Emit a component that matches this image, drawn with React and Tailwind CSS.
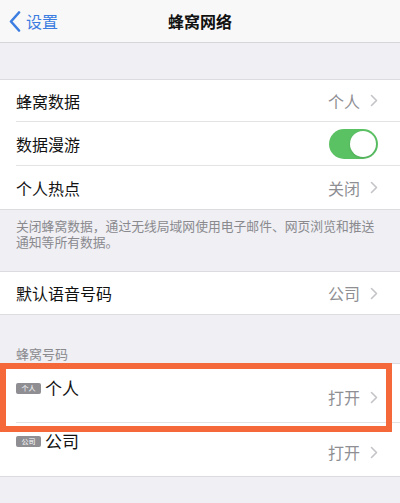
const font = "font-['Noto_Sans_CJK_SC',sans-serif]"

function Chevron() {
  return (
    <svg width="8" height="13" viewBox="0 0 8 13" className="ml-[10px]">
      <path d="M1.5 1.5 L6.5 6.5 L1.5 11.5" fill="none" stroke="#c4c4c8" strokeWidth="1.6" strokeLinecap="round" strokeLinejoin="round" />
    </svg>
  )
}

function Row({ label, value, toggle, last, height = 'h-[44px]' }) {
  return (
    <div className={`flex items-center pl-4 bg-white ${height}`}>
      <div className={`flex h-full flex-1 items-center pr-[22px] ${last ? '' : 'border-b border-[#e3e3e6]'}`}>
        <span className="flex-1 text-[16px] text-[#111]">{label}</span>
        {toggle ? (
          <div className="flex h-[30px] w-[49px] items-center justify-end rounded-full bg-[#5bc264] pr-[2px]">
            <div className="h-[26px] w-[26px] rounded-full bg-white shadow" />
          </div>
        ) : (
          <span className="flex items-center text-[16px] text-[#8e8e93]">
            {value}
            <Chevron />
          </span>
        )}
      </div>
    </div>
  )
}

function SimRow({ badge, label, last, height, titleTop, valueTop }) {
  return (
    <div className={`flex bg-white pl-4 ${height}`}>
      <div className={`flex h-full flex-1 pr-[22px] ${last ? '' : 'border-b border-[#e3e3e6]'}`}>
        <div className={`flex flex-1 items-center gap-[4px] self-start ${titleTop}`}>
          <span className="flex h-[11px] w-[25px] items-center justify-center rounded-[2px] bg-[#8e8e93] text-[7px] leading-none text-white">
            {badge}
          </span>
          <span className="text-[17px] leading-[20px] text-[#111]">{label}</span>
        </div>
        <span className={`flex items-center self-start text-[16px] leading-[24px] text-[#8e8e93] ${valueTop}`}>
          打开
          <Chevron />
        </span>
      </div>
    </div>
  )
}

export default function App() {
  return (
    <div className={`w-[400px] h-[503px] overflow-hidden bg-[#efeff4] ${font}`}>
      <div className="relative flex h-[43px] items-center border-b border-[#d6d6da] bg-[#f8f8f8]">
        <div className="flex items-center pl-[9px] text-[#3b7de0]">
          <svg width="12" height="21" viewBox="0 0 12 21">
            <path d="M10 1.5 L2 10.5 L10 19.5" fill="none" stroke="#3b7de0" strokeWidth="2.6" strokeLinecap="round" strokeLinejoin="round" />
          </svg>
          <span className="ml-[5px] text-[16px]">设置</span>
        </div>
        <span className="absolute left-1/2 -translate-x-1/2 text-[16px] font-bold text-[#111]">蜂窝网络</span>
      </div>

      <div className="h-[36px]" />

      <div className="border-y border-[#dcdce0]">
        <Row label="蜂窝数据" value="个人" height="h-[42px]" />
        <Row label="数据漫游" toggle />
        <Row label="个人热点" value="关闭" last height="h-[43px]" />
      </div>

      <div className="h-[61px] px-4 pt-[8px] text-[12.8px] leading-[16px] text-[#8a8a8e]">
        关闭蜂窝数据，通过无线局域网使用电子邮件、网页浏览和推送通知等所有数据。
      </div>

      <div className="border-y border-[#dcdce0]">
        <Row label="默认语音号码" value="公司" last height="h-[42px]" />
      </div>

      <div className="h-[48px] px-4 pt-[31px] text-[13px] leading-[16px] text-[#8a8a8e]">蜂窝号码</div>

      <div className="relative border-y border-[#dcdce0]">
        <SimRow badge="个人" label="个人" height="h-[59px]" titleTop="mt-[14px]" valueTop="mt-[21px]" />
        <SimRow badge="公司" label="公司" last height="h-[53px]" titleTop="mt-[8px]" valueTop="mt-[17px]" />
        <div className="absolute left-0 top-[-1px] h-[69px] w-[392px] border-[6px] border-[#f4683a]" />
      </div>
    </div>
  )
}
